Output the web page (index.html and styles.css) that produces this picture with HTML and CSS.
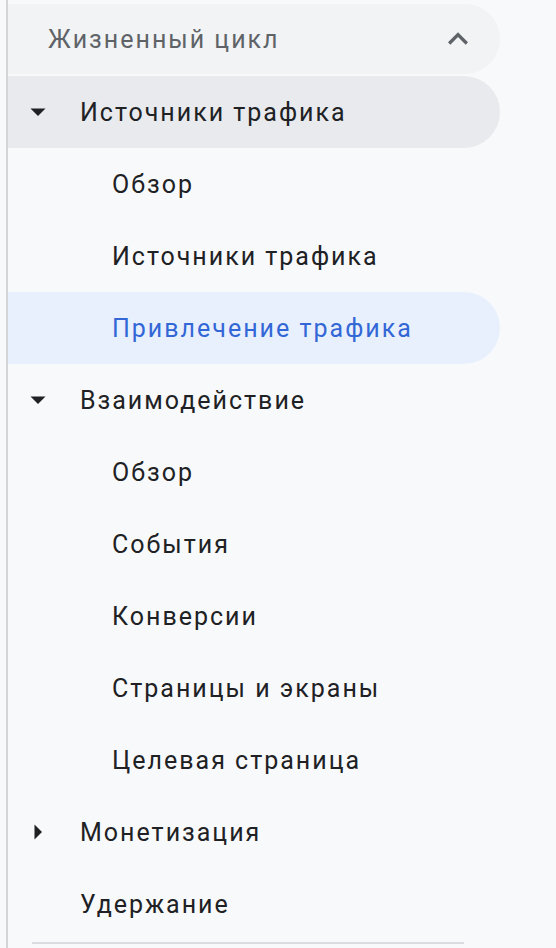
FILE: index.html
```html
<!DOCTYPE html>
<html>
<head>
    <title>Отчёты</title>
    <link rel="stylesheet" href="styles.css">
</head>
<body>
    <nav class="sidebar">
        <div class="section-head">
            <span>Жизненный цикл</span>
            <svg class="chevron" width="40" height="40" viewBox="0 0 24 24"><path d="M7.4 15.4L12 10.8l4.6 4.6L18 14l-6-6-6 6z"/></svg>
        </div>

        <div class="item group open active-group">
            <svg class="caret" width="20" height="20" viewBox="0 0 20 20"><path d="M2.5 6.5h15l-7.5 7.5z"/></svg>
            <span>Источники трафика</span>
        </div>
        <div class="item sub">Обзор</div>
        <div class="item sub">Источники трафика</div>
        <div class="item sub selected">Привлечение трафика</div>

        <div class="item group open">
            <svg class="caret" width="20" height="20" viewBox="0 0 20 20"><path d="M2.5 6.5h15l-7.5 7.5z"/></svg>
            <span>Взаимодействие</span>
        </div>
        <div class="item sub">Обзор</div>
        <div class="item sub">События</div>
        <div class="item sub">Конверсии</div>
        <div class="item sub">Страницы и экраны</div>
        <div class="item sub">Целевая страница</div>

        <div class="item group">
            <svg class="caret" width="20" height="20" viewBox="0 0 20 20"><path d="M6.5 2.5v15l7.5-7.5z"/></svg>
            <span>Монетизация</span>
        </div>
        <div class="item group plain">
            <span>Удержание</span>
        </div>

        <div class="divider"></div>
    </nav>
</body>
</html>
```

FILE: styles.css
```css
html, body { margin: 0; padding: 0; background: #f8f9fa; }
body {
    font-family: Roboto, "Noto Sans", sans-serif;
    padding-left: 6px;
    height: 948px;
    overflow: hidden;
}
.sidebar {
    border-left: 2px solid #d4d5d7;
    height: 100%;
    padding-top: 4px;
    box-sizing: border-box;
}
.section-head {
    width: 492px;
    height: 70px;
    margin-bottom: 2px;
    background: #f1f3f4;
    border-radius: 0 36px 36px 0;
    display: flex;
    align-items: center;
    justify-content: space-between;
    padding: 0 22px 0 40px;
    box-sizing: border-box;
    color: #5f6368;
    font-size: 25px;
    letter-spacing: 2px;
}
.chevron { fill: #5f6368; }
.item {
    width: 492px;
    height: 72px;
    display: flex;
    align-items: center;
    box-sizing: border-box;
    border-radius: 0 36px 36px 0;
    color: #202124;
    font-size: 25px;
    letter-spacing: 2px;
}
.group { padding-left: 20px; gap: 32px; }
.group.plain { padding-left: 72px; }
.caret { fill: #202124; flex-shrink: 0; }
.active-group { background: #e8eaed; }
.sub { padding-left: 104px; }
.selected { background: #e8f0fe; color: #3367d6; }
.divider {
    width: 432px;
    margin-left: 24px;
    border-top: 2px solid #dadce0;
    margin-top: 2px;
}
```
